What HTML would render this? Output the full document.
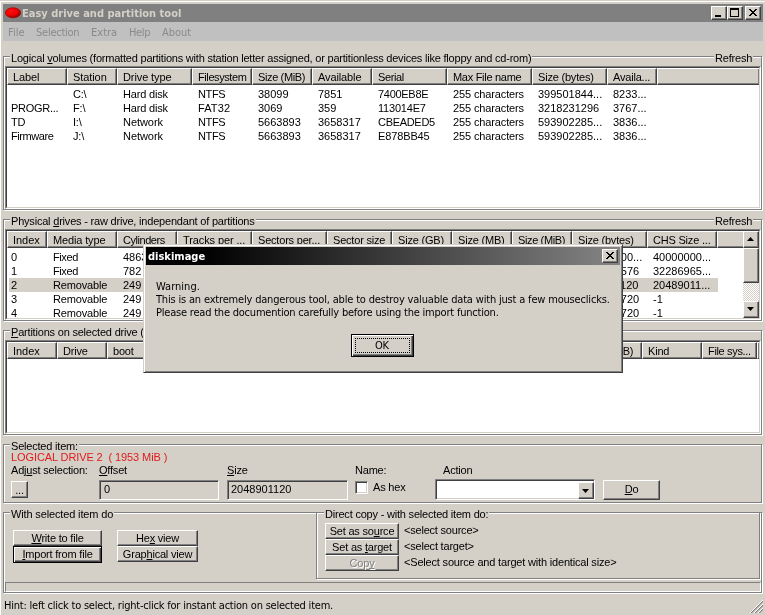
<!DOCTYPE html><html><head><meta charset="utf-8"><title>Easy drive and partition tool</title><style>
html,body{margin:0;padding:0}
body{width:765px;height:615px;overflow:hidden;background:#d4d0c8;position:relative;font:11px "Liberation Sans",sans-serif;color:#000}
div,span{position:absolute;box-sizing:border-box;white-space:nowrap}
.t{font:11px/13px "Liberation Sans",sans-serif;letter-spacing:-0.2px;height:13px}
.n{letter-spacing:0}
.h{font:11px/13px "DejaVu Sans Condensed","Liberation Sans",sans-serif;letter-spacing:-0.2px;height:13px}
.hb{font:bold 11px/13px "DejaVu Sans Condensed","Liberation Sans",sans-serif;height:13px}
u{text-decoration:underline;text-underline-offset:1px;text-decoration-skip-ink:none}
.grp{border:1px solid #808080;box-shadow:1px 1px 0 #fff, inset 1px 1px 0 #fff}
.gl{background:#d4d0c8;padding:0 1px}
.lv{background:#fff;border:1px solid;border-color:#808080 #fff #fff #808080;overflow:hidden}
.lv:before{content:"";position:absolute;left:0;top:0;right:0;bottom:0;border:1px solid;border-color:#404040 #d4d0c8 #d4d0c8 #404040;pointer-events:none;z-index:5}
.hd{background:#d4d0c8;height:17px;top:1px;border:1px solid;border-color:#fff #404040 #404040 #fff;box-shadow:inset -1px -1px 0 #808080}
.hd .t{top:2px;left:5px}
.btn{background:#d4d0c8;border:1px solid;border-color:#fff #404040 #404040 #fff;box-shadow:inset -1px -1px 0 #808080, inset 1px 1px 0 #d4d0c8;text-align:center}
.btn .t{left:0;right:0;text-align:center}
.def{border:1px solid #000;box-shadow:inset 1px 1px 0 #fff, inset -1px -1px 0 #404040, inset -2px -2px 0 #808080}
.sunk{border:1px solid;border-color:#808080 #fff #fff #808080;box-shadow:inset 1px 1px 0 #404040, inset -1px -1px 0 #d4d0c8}
.sel{background:#d4d0c8}
.red{color:#e21a1a}
.dis{color:#808080;text-shadow:1px 1px 0 #fff}
</style></head><body><div id="app" style="left:0;top:0;width:765px;height:615px;will-change:transform">
<div style="left:0;top:1px;width:765px;height:1px;background:#fff"></div>
<div style="left:0;top:1px;width:1px;height:614px;background:#fff"></div>
<div style="left:3px;top:4px;width:760px;height:18px;background:#808080"></div>
<svg style="position:absolute;left:4px;top:6px" width="18" height="14" viewBox="0 0 18 14"><defs><radialGradient id="rg" cx="0.35" cy="0.3" r="0.8"><stop offset="0" stop-color="#ff1010"/><stop offset="0.55" stop-color="#f00000"/><stop offset="1" stop-color="#700000"/></radialGradient></defs><ellipse cx="9" cy="6.8" rx="7.6" ry="5" fill="url(#rg)" stroke="#a80000" stroke-width="0.8"/></svg>
<span class="hb" style="left:22px;top:7px;color:#d4d0c8;letter-spacing:-0.00px;">Easy drive and partition tool</span>
<div class="btn" style="left:711px;top:6px;width:16px;height:14px">
<div style="left:3px;top:8px;width:6px;height:2px;background:#000"></div>
</div>
<div class="btn" style="left:727px;top:6px;width:16px;height:14px">
<div style="left:2px;top:1px;width:9px;height:9px;border:1px solid #000;border-top-width:2px"></div>
</div>
<div class="btn" style="left:745px;top:6px;width:16px;height:14px">
<svg style="position:absolute;left:3px;top:2px" width="8" height="7" viewBox="0 0 8 7"><path shape-rendering="crispEdges" d="M0 0h2v1h-2zM6 0h2v1h-2zM1 1h2v1h-2zM5 1h2v1h-2zM2 2h4v1h-4zM3 3h2v1h-2zM2 4h4v1h-4zM1 5h2v1h-2zM5 5h2v1h-2zM0 6h2v1h-2zM6 6h2v1h-2z" fill="#000"/></svg>
</div>
<div style="left:3px;top:22px;width:760px;height:19px;background:#c0c0c0"></div>
<span class="h" style="left:8px;top:26px;color:#8a8a8a;letter-spacing:0.00px;">File</span>
<span class="h" style="left:36px;top:26px;color:#8a8a8a;letter-spacing:-0.25px;">Selection</span>
<span class="h" style="left:91px;top:26px;color:#8a8a8a;letter-spacing:0.01px;">Extra</span>
<span class="h" style="left:129px;top:26px;color:#8a8a8a;letter-spacing:-0.37px;">Help</span>
<span class="h" style="left:162px;top:26px;color:#8a8a8a;letter-spacing:-0.05px;">About</span>
<div class="grp" style="left:3px;top:56px;width:759px;height:154px"></div>
<span class="t gl" style="left:10px;top:52px;letter-spacing:-0.21px;">Logical <u>v</u>olumes (formatted partitions with station letter assigned, or partitionless devices like floppy and cd-rom)</span>
<span class="t gl" style="left:714px;top:52px;letter-spacing:-0.18px;">Refresh</span>
<div class="lv" style="left:5px;top:66px;width:756px;height:143px">
<div class="hd" style="left:1px;width:60px"><span class="t" style="letter-spacing:-0.10px;">Label</span></div>
<div class="hd" style="left:61px;width:50px"><span class="t" style="letter-spacing:-0.08px;">Station</span></div>
<div class="hd" style="left:111px;width:75px"><span class="t" style="letter-spacing:-0.10px;">Drive type</span></div>
<div class="hd" style="left:186px;width:60px"><span class="t" style="letter-spacing:-0.41px;">Filesystem</span></div>
<div class="hd" style="left:246px;width:60px"><span class="t" style="letter-spacing:-0.37px;">Size (MiB)</span></div>
<div class="hd" style="left:306px;width:60px"><span class="t" style="letter-spacing:-0.11px;">Available</span></div>
<div class="hd" style="left:366px;width:75px"><span class="t" style="letter-spacing:-0.37px;">Serial</span></div>
<div class="hd" style="left:441px;width:85px"><span class="t" style="letter-spacing:-0.29px;">Max File name</span></div>
<div class="hd" style="left:526px;width:75px"><span class="t" style="">Size (bytes)</span></div>
<div class="hd" style="left:601px;width:50px"><span class="t" style="">Availa...</span></div>
<div class="hd" style="left:651px;width:103px"></div>
<span class="t" style="left:67px;top:21px;">C:\</span>
<span class="t" style="left:117px;top:21px;letter-spacing:-0.19px;">Hard disk</span>
<span class="t" style="left:192px;top:21px;letter-spacing:-0.38px;">NTFS</span>
<span class="t n" style="left:252px;top:21px;">38099</span>
<span class="t n" style="left:312px;top:21px;">7851</span>
<span class="t" style="left:372px;top:21px;letter-spacing:-0.29px;">7400EB8E</span>
<span class="t" style="left:447px;top:21px;letter-spacing:-0.13px;">255 characters</span>
<span class="t n" style="left:532px;top:21px;">399501844...</span>
<span class="t n" style="left:607px;top:21px;">8233...</span>
<span class="t" style="left:5px;top:35px;letter-spacing:-0.28px;">PROGR...</span>
<span class="t" style="left:67px;top:35px;">F:\</span>
<span class="t" style="left:117px;top:35px;letter-spacing:-0.19px;">Hard disk</span>
<span class="t" style="left:192px;top:35px;letter-spacing:0.12px;">FAT32</span>
<span class="t n" style="left:252px;top:35px;">3069</span>
<span class="t n" style="left:312px;top:35px;">359</span>
<span class="t" style="left:372px;top:35px;">113014E7</span>
<span class="t" style="left:447px;top:35px;letter-spacing:-0.13px;">255 characters</span>
<span class="t n" style="left:532px;top:35px;">3218231296</span>
<span class="t n" style="left:607px;top:35px;">3767...</span>
<span class="t" style="left:5px;top:49px;">TD</span>
<span class="t" style="left:67px;top:49px;">I:\</span>
<span class="t" style="left:117px;top:49px;letter-spacing:-0.05px;">Network</span>
<span class="t" style="left:192px;top:49px;letter-spacing:-0.38px;">NTFS</span>
<span class="t n" style="left:252px;top:49px;">5663893</span>
<span class="t n" style="left:312px;top:49px;">3658317</span>
<span class="t" style="left:372px;top:49px;letter-spacing:-0.31px;">CBEADED5</span>
<span class="t" style="left:447px;top:49px;letter-spacing:-0.13px;">255 characters</span>
<span class="t n" style="left:532px;top:49px;">593902285...</span>
<span class="t n" style="left:607px;top:49px;">3836...</span>
<span class="t" style="left:5px;top:63px;letter-spacing:-0.44px;">Firmware</span>
<span class="t" style="left:67px;top:63px;">J:\</span>
<span class="t" style="left:117px;top:63px;letter-spacing:-0.05px;">Network</span>
<span class="t" style="left:192px;top:63px;letter-spacing:-0.38px;">NTFS</span>
<span class="t n" style="left:252px;top:63px;">5663893</span>
<span class="t n" style="left:312px;top:63px;">3658317</span>
<span class="t" style="left:372px;top:63px;letter-spacing:-0.13px;">E878BB45</span>
<span class="t" style="left:447px;top:63px;letter-spacing:-0.13px;">255 characters</span>
<span class="t n" style="left:532px;top:63px;">593902285...</span>
<span class="t n" style="left:607px;top:63px;">3836...</span>
</div>
<div class="grp" style="left:3px;top:219px;width:759px;height:102px"></div>
<span class="t gl" style="left:10px;top:215px;letter-spacing:-0.20px;">Physical <u>d</u>rives - raw drive, independant of partitions</span>
<span class="t gl" style="left:714px;top:215px;letter-spacing:-0.18px;">Refresh</span>
<div class="lv" style="left:5px;top:229px;width:756px;height:91px">
<div class="hd" style="left:1px;width:40px"><span class="t" style="letter-spacing:-0.04px;">Index</span></div>
<div class="hd" style="left:41px;width:70px"><span class="t" style="letter-spacing:-0.14px;">Media type</span></div>
<div class="hd" style="left:111px;width:60px"><span class="t" style="letter-spacing:-0.45px;">Cylinders</span></div>
<div class="hd" style="left:171px;width:75px"><span class="t" style="letter-spacing:-0.11px;">Tracks per ...</span></div>
<div class="hd" style="left:246px;width:75px"><span class="t" style="">Sectors per...</span></div>
<div class="hd" style="left:321px;width:65px"><span class="t" style="">Sector size</span></div>
<div class="hd" style="left:386px;width:60px"><span class="t" style="">Size (GB)</span></div>
<div class="hd" style="left:446px;width:60px"><span class="t" style="">Size (MB)</span></div>
<div class="hd" style="left:506px;width:60px"><span class="t" style="letter-spacing:-0.37px;">Size (MiB)</span></div>
<div class="hd" style="left:566px;width:75px"><span class="t" style="">Size (bytes)</span></div>
<div class="hd" style="left:641px;width:70px"><span class="t" style="">CHS Size ...</span></div>
<div class="hd" style="left:711px;width:43px"></div>
<span class="t n" style="left:5px;top:21px;">0</span>
<span class="t" style="left:47px;top:21px;letter-spacing:-0.40px;">Fixed</span>
<span class="t n" style="left:117px;top:21px;">4863</span>
<span class="t n" style="left:177px;top:21px;">255</span>
<span class="t n" style="left:252px;top:21px;">63</span>
<span class="t n" style="left:327px;top:21px;">512</span>
<span class="t n" style="left:392px;top:21px;">40</span>
<span class="t n" style="left:452px;top:21px;">40000</span>
<span class="t n" style="left:512px;top:21px;">38146</span>
<span class="t n" style="left:572px;top:21px;">400000000...</span>
<span class="t n" style="left:647px;top:21px;">40000000...</span>
<span class="t n" style="left:5px;top:35px;">1</span>
<span class="t" style="left:47px;top:35px;letter-spacing:-0.40px;">Fixed</span>
<span class="t n" style="left:117px;top:35px;">782</span>
<span class="t n" style="left:177px;top:35px;">255</span>
<span class="t n" style="left:252px;top:35px;">63</span>
<span class="t n" style="left:327px;top:35px;">512</span>
<span class="t n" style="left:392px;top:35px;">6</span>
<span class="t n" style="left:452px;top:35px;">6448</span>
<span class="t n" style="left:512px;top:35px;">6149</span>
<span class="t n" style="left:572px;top:35px;">6448619576</span>
<span class="t n" style="left:647px;top:35px;">32286965...</span>
<div class="sel" style="left:3px;top:48px;width:709px;height:14px"></div>
<span class="t n" style="left:5px;top:49px;">2</span>
<span class="t" style="left:47px;top:49px;letter-spacing:-0.15px;">Removable</span>
<span class="t n" style="left:117px;top:49px;">249</span>
<span class="t n" style="left:177px;top:49px;">255</span>
<span class="t n" style="left:252px;top:49px;">63</span>
<span class="t n" style="left:327px;top:49px;">512</span>
<span class="t n" style="left:392px;top:49px;">2</span>
<span class="t n" style="left:452px;top:49px;">2048</span>
<span class="t n" style="left:512px;top:49px;">1953</span>
<span class="t n" style="left:572px;top:49px;">2048901120</span>
<span class="t n" style="left:647px;top:49px;">20489011...</span>
<span class="t n" style="left:5px;top:63px;">3</span>
<span class="t" style="left:47px;top:63px;letter-spacing:-0.15px;">Removable</span>
<span class="t n" style="left:117px;top:63px;">249</span>
<span class="t n" style="left:177px;top:63px;">255</span>
<span class="t n" style="left:252px;top:63px;">63</span>
<span class="t n" style="left:327px;top:63px;">512</span>
<span class="t n" style="left:392px;top:63px;">2</span>
<span class="t n" style="left:452px;top:63px;">2048</span>
<span class="t n" style="left:512px;top:63px;">1953</span>
<span class="t n" style="left:572px;top:63px;">2048901720</span>
<span class="t n" style="left:647px;top:63px;">-1</span>
<span class="t n" style="left:5px;top:77px;">4</span>
<span class="t" style="left:47px;top:77px;letter-spacing:-0.15px;">Removable</span>
<span class="t n" style="left:117px;top:77px;">249</span>
<span class="t n" style="left:177px;top:77px;">255</span>
<span class="t n" style="left:252px;top:77px;">63</span>
<span class="t n" style="left:327px;top:77px;">512</span>
<span class="t n" style="left:392px;top:77px;">2</span>
<span class="t n" style="left:452px;top:77px;">2048</span>
<span class="t n" style="left:512px;top:77px;">1953</span>
<span class="t n" style="left:572px;top:77px;">2048901720</span>
<span class="t n" style="left:647px;top:77px;">-1</span>
<div style="left:737px;top:1px;width:16px;height:87px;background:#ebe9e5;background-image:repeating-conic-gradient(#fff 0 25%,#d4d0c8 0 50%);background-size:2px 2px"></div>
<div class="btn" style="left:737px;top:1px;width:16px;height:17px"><svg style="position:absolute;left:3px;top:5px" width="7" height="4" viewBox="0 0 7 4"><path d="M0 4L3.5 0 7 4z" fill="#000"/></svg></div>
<div class="btn" style="left:737px;top:18px;width:16px;height:35px"></div>
<div class="btn" style="left:737px;top:71px;width:16px;height:17px"><svg style="position:absolute;left:3px;top:5px" width="7" height="4" viewBox="0 0 7 4"><path d="M0 0L3.5 4 7 0z" fill="#000"/></svg></div>
</div>
<div class="grp" style="left:3px;top:330px;width:759px;height:105px"></div>
<span class="t gl" style="left:10px;top:326px;"><u>P</u>artitions on selected drive (double click to select)</span>
<div class="lv" style="left:5px;top:340px;width:756px;height:94px">
<div class="hd" style="left:1px;width:50px"><span class="t" style="letter-spacing:-0.04px;">Index</span></div>
<div class="hd" style="left:51px;width:50px"><span class="t" style="">Drive</span></div>
<div class="hd" style="left:101px;width:50px"><span class="t" style="">boot</span></div>
<div class="hd" style="left:151px;width:90px"><span class="t" style="">Start (CHS)</span></div>
<div class="hd" style="left:241px;width:90px"><span class="t" style="">End (CHS)</span></div>
<div class="hd" style="left:331px;width:90px"><span class="t" style="">Start sector</span></div>
<div class="hd" style="left:421px;width:153px"><span class="t" style="">Sectors</span></div>
<div class="hd" style="left:574px;width:62px"><span class="t" style="letter-spacing:-0.37px;">Size (MiB)</span></div>
<div class="hd" style="left:636px;width:60px"><span class="t" style="">Kind</span></div>
<div class="hd" style="left:696px;width:55px"><span class="t" style="letter-spacing:-0.34px;">File sys...</span></div>
<div class="hd" style="left:751px;width:3px"></div>
</div>
<div class="grp" style="left:3px;top:444px;width:759px;height:59px"></div>
<span class="t gl" style="left:10px;top:440px;">Selected item:</span>
<span class="t red" style="left:11px;top:451px;letter-spacing:-0.10px;">LOGICAL DRIVE 2&nbsp; ( 1953 MiB )</span>
<span class="t" style="left:11px;top:464px;">Adj<u>u</u>st selection:</span>
<span class="t" style="left:99px;top:464px;"><u>O</u>ffset</span>
<span class="t" style="left:227px;top:464px;"><u>S</u>ize</span>
<span class="t" style="left:355px;top:464px;">Name:</span>
<span class="t" style="left:443px;top:464px;">Action</span>
<div class="btn" style="left:11px;top:481px;width:17px;height:17px"><span class="t" style="top:2px">...</span></div>
<div class="sunk" style="left:99px;top:480px;width:120px;height:20px"><span class="t n" style="left:4px;top:2px">0</span></div>
<div class="sunk" style="left:227px;top:480px;width:121px;height:20px"><span class="t n" style="left:3px;top:2px">2048901120</span></div>
<div class="sunk" style="left:355px;top:481px;width:13px;height:13px;background:#fff"></div>
<span class="t" style="left:373px;top:481px;">As hex</span>
<div class="sunk" style="left:435px;top:479px;width:160px;height:21px;background:#fff"><div class="btn" style="left:142px;top:2px;width:16px;height:17px"><svg style="position:absolute;left:3px;top:6px" width="7" height="4" viewBox="0 0 7 4"><path d="M0 0L3.5 4 7 0z" fill="#000"/></svg></div></div>
<div class="btn" style="left:603px;top:480px;width:57px;height:20px"><span class="t" style="top:2px"><u>D</u>o</span></div>
<div class="grp" style="left:3px;top:512px;width:759px;height:81px"></div>
<span class="t gl" style="left:10px;top:508px;letter-spacing:-0.14px;">With selected item do</span>
<div class="btn" style="left:13px;top:530px;width:89px;height:16px"><span class="t" style="top:1px;"><u>W</u>rite to file</span></div>
<div class="btn def" style="left:13px;top:546px;width:89px;height:17px"><span class="t" style="top:1px;"><u>I</u>mport from file</span></div>
<div class="btn" style="left:117px;top:530px;width:81px;height:16px"><span class="t" style="top:1px;">He<u>x</u> view</span></div>
<div class="btn" style="left:117px;top:546px;width:81px;height:16px"><span class="t" style="top:1px;">Grap<u>h</u>ical view</span></div>
<div class="grp" style="left:316px;top:512px;width:444px;height:67px"></div>
<span class="t gl" style="left:324px;top:508px;">Direct copy - with selected item do:</span>
<div class="btn" style="left:325px;top:523px;width:74px;height:16px"><span class="t" style="top:1px;">Set as so<u>u</u>rce</span></div>
<div class="btn" style="left:325px;top:539px;width:74px;height:16px"><span class="t" style="top:1px;">Set as <u>t</u>arget</span></div>
<div class="btn" style="left:325px;top:555px;width:74px;height:16px"><span class="t dis" style="top:1px;">Cop<u>y</u></span></div>
<span class="t" style="left:404px;top:524px;letter-spacing:-0.21px;">&lt;select source&gt;</span>
<span class="t" style="left:404px;top:540px;letter-spacing:-0.20px;">&lt;select target&gt;</span>
<span class="t" style="left:404px;top:556px;letter-spacing:-0.18px;">&lt;Select source and target with identical size&gt;</span>
<div style="left:5px;top:582px;width:756px;height:10px;border:1px solid;border-color:#808080 #fff #fff #808080"></div>
<span class="h" style="left:4px;top:599px;letter-spacing:-0.22px;">Hint: left click to select, right-click for instant action on selected item.</span>
<svg style="position:absolute;left:750px;top:600px" width="13" height="13" viewBox="0 0 13 13"><g stroke="#808080" stroke-width="1.3"><path d="M1 13L13 1M5 13L13 5M9 13L13 9"/></g><g stroke="#fff" stroke-width="1"><path d="M0 13L13 0M4 13L13 4M8 13L13 8"/></g></svg>
<div style="left:143px;top:244px;width:480px;height:129px;z-index:10;background:#d4d0c8;border:1px solid;border-color:#d4d0c8 #404040 #404040 #d4d0c8;box-shadow:inset 1px 1px 0 #fff, inset -1px -1px 0 #808080">
<div style="left:2px;top:2px;width:474px;height:18px;background:linear-gradient(to right,#000 0%,#000 12%,#858585 100%)"></div>
<span class="hb" style="left:4px;top:5px;color:#fff;letter-spacing:-0.00px;">diskimage</span>
<div class="btn" style="left:458px;top:4px;width:16px;height:14px"><svg style="position:absolute;left:3px;top:2px" width="8" height="7" viewBox="0 0 8 7"><path shape-rendering="crispEdges" d="M0 0h2v1h-2zM6 0h2v1h-2zM1 1h2v1h-2zM5 1h2v1h-2zM2 2h4v1h-4zM3 3h2v1h-2zM2 4h4v1h-4zM1 5h2v1h-2zM5 5h2v1h-2zM0 6h2v1h-2zM6 6h2v1h-2z" fill="#000"/></svg></div>
<span class="h" style="left:12px;top:35px;letter-spacing:0.01px;">Warning.</span>
<span class="h" style="left:12px;top:48px;letter-spacing:-0.18px;">This is an extremely dangerous tool, able to destroy valuable data with just a few mouseclicks.</span>
<span class="h" style="left:12px;top:61px;letter-spacing:-0.21px;">Please read the documention carefully before using the import function.</span>
<div class="btn def" style="left:207px;top:89px;width:63px;height:23px"><div style="left:3px;top:3px;right:3px;bottom:3px;border:1px dotted #000"></div><span class="h" style="left:23px;top:4px;letter-spacing:-0.4px">OK</span></div>
</div>
</div></body></html>
